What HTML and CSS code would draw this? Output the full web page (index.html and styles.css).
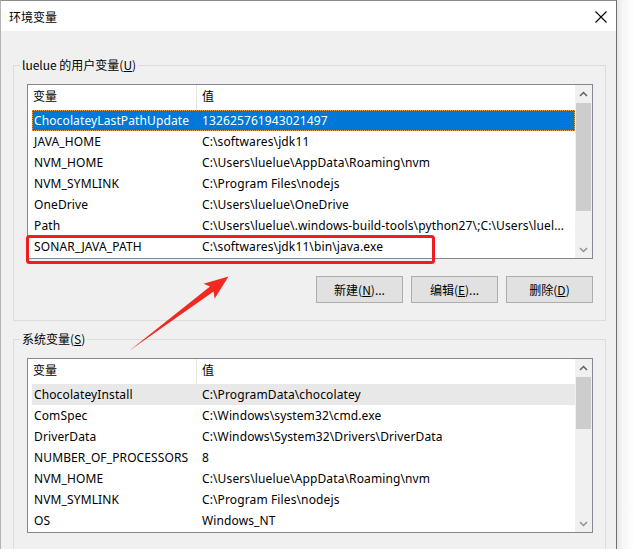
FILE: index.html
```html
<!DOCTYPE html>
<html lang="zh">
<head>
<meta charset="utf-8">
<title>环境变量</title>
<link rel="stylesheet" href="styles.css">
</head>
<body>
<div class="page">
  <div class="window">
    <div class="titlebar">
      <span class="title">环境变量</span>
      <svg class="close" width="12" height="12" viewBox="0 0 12 12"><path d="M0.5 0.5 L11.5 11.5 M11.5 0.5 L0.5 11.5" stroke="#000" stroke-width="1.1" fill="none"/></svg>
    </div>
    <div class="content">
      <fieldset class="group">
        <legend>luelue 的用户变量(<u>U</u>)</legend>
        <div class="listview">
          <div class="lv-main">
            <div class="lv-head"><div class="h1">变量</div><div class="h2">值</div></div>
            <div class="row focus"><div class="c1">ChocolateyLastPathUpdate</div><div class="c2">132625761943021497</div></div>
            <div class="row"><div class="c1">JAVA_HOME</div><div class="c2">C:\softwares\jdk11</div></div>
            <div class="row"><div class="c1">NVM_HOME</div><div class="c2">C:\Users\luelue\AppData\Roaming\nvm</div></div>
            <div class="row"><div class="c1">NVM_SYMLINK</div><div class="c2">C:\Program Files\nodejs</div></div>
            <div class="row"><div class="c1">OneDrive</div><div class="c2">C:\Users\luelue\OneDrive</div></div>
            <div class="row"><div class="c1">Path</div><div class="c2">C:\Users\luelue\.windows-build-tools\python27\;C:\Users\luel...</div></div>
            <div class="row"><div class="c1">SONAR_JAVA_PATH</div><div class="c2">C:\softwares\jdk11\bin\java.exe</div></div>
          </div>
          <div class="vscroll">
            <div class="arrow"><svg width="9" height="6" viewBox="0 0 9 6"><path d="M1 5 L4.5 1.5 L8 5" stroke="#606060" stroke-width="1.5" fill="none"/></svg></div>
            <div class="track"><div class="thumb" style="margin-top:1px;height:108px"></div></div>
            <div class="arrow"><svg width="9" height="6" viewBox="0 0 9 6"><path d="M1 1 L4.5 4.5 L8 1" stroke="#909090" stroke-width="1.5" fill="none"/></svg></div>
          </div>
        </div>
        <div class="buttons">
          <button class="btn">新建(<u>N</u>)...</button>
          <button class="btn">编辑(<u>E</u>)...</button>
          <button class="btn">删除(<u>D</u>)</button>
        </div>
      </fieldset>
      <fieldset class="group group2">
        <legend>系统变量(<u>S</u>)</legend>
        <div class="listview">
          <div class="lv-main">
            <div class="lv-head"><div class="h1">变量</div><div class="h2">值</div></div>
            <div class="row inactive"><div class="c1">ChocolateyInstall</div><div class="c2">C:\ProgramData\chocolatey</div></div>
            <div class="row"><div class="c1">ComSpec</div><div class="c2">C:\Windows\system32\cmd.exe</div></div>
            <div class="row"><div class="c1">DriverData</div><div class="c2">C:\Windows\System32\Drivers\DriverData</div></div>
            <div class="row"><div class="c1">NUMBER_OF_PROCESSORS</div><div class="c2">8</div></div>
            <div class="row"><div class="c1">NVM_HOME</div><div class="c2">C:\Users\luelue\AppData\Roaming\nvm</div></div>
            <div class="row"><div class="c1">NVM_SYMLINK</div><div class="c2">C:\Program Files\nodejs</div></div>
            <div class="row"><div class="c1">OS</div><div class="c2">Windows_NT</div></div>
          </div>
          <div class="vscroll">
            <div class="arrow"><svg width="9" height="6" viewBox="0 0 9 6"><path d="M1 5 L4.5 1.5 L8 5" stroke="#606060" stroke-width="1.5" fill="none"/></svg></div>
            <div class="track"><div class="thumb" style="margin-top:1px;height:52px"></div></div>
            <div class="arrow"><svg width="9" height="6" viewBox="0 0 9 6"><path d="M1 1 L4.5 4.5 L8 1" stroke="#909090" stroke-width="1.5" fill="none"/></svg></div>
          </div>
        </div>
      </fieldset>
    </div>
  </div>
  <div class="shadow"></div>
  <svg class="annotation" width="638" height="549" viewBox="0 0 638 549">
    <rect x="27.5" y="236.5" width="406" height="26" rx="2" ry="2" fill="none" stroke="#f21c1c" stroke-width="3"/>
    <polygon points="129,351 210,286.6 203.5,283.8 228.5,276.5 214.6,298.8 213.6,291.4" fill="#f02a22"/>
  </svg>
</div>
</body>
</html>
```

FILE: styles.css
```css
html, body {
  margin: 0;
  padding: 0;
  background: #ffffff;
}

.page {
  position: relative;
  width: 638px;
  height: 549px;
  overflow: hidden;
  display: flex;
  font-family: "Noto Sans", "Noto Sans CJK SC", sans-serif;
  font-size: 12px;
  color: #000;
}

.window {
  width: 617px;
  height: 549px;
  box-sizing: border-box;
  border-top: 1px solid #8c8c8c;
  border-right: 1px solid #6f6f6f;
  border-left: 1px solid #b4b4b4;
  display: flex;
  flex-direction: column;
  flex: none;
}

.shadow {
  flex: 1;
  background: linear-gradient(to right, #e6e6e6, #f7f7f7 6px, #ffffff 18px);
}

.titlebar {
  height: 30px;
  flex: none;
  background: #ffffff;
  display: flex;
  align-items: center;
  justify-content: space-between;
  padding: 0 9px 0 8px;
}

.title {
  font-family: "Noto Sans CJK SC", sans-serif;
  font-size: 12px;
  line-height: 16px;
  margin-top: 1px;
}

.close {
  display: block;
  margin-top: 1px;
}

.content {
  flex: 1;
  background: #f0f0f0;
  padding: 0 10px 0 12px;
  overflow: hidden;
}

.group {
  margin: 26px 0 0 0;
  padding: 11px 12px 17px 13px;
  border: 1px solid #dcdcdc;
  min-width: 0;
}

.group2 {
  margin-top: 10px;
  padding-bottom: 60px;
}

.group legend {
  font-family: "Noto Sans CJK SC", sans-serif;
  line-height: 16px;
  padding: 0 2px;
  margin-left: -7px;
  color: #000;
}

.listview {
  height: 175px;
  box-sizing: border-box;
  border: 1px solid #828790;
  background: #ffffff;
  display: flex;
}

.lv-main {
  flex: 1;
  overflow: hidden;
  min-width: 0;
}

.lv-head {
  height: 25px;
  display: flex;
}

.lv-head .h1 {
  width: 163px;
  padding-left: 5px;
  border-right: 1px solid #e5e5e5;
  font-family: "Noto Sans CJK SC", sans-serif;
  line-height: 22px;
}

.lv-head .h2 {
  padding-left: 5px;
  font-family: "Noto Sans CJK SC", sans-serif;
  line-height: 22px;
}

.row {
  height: 21px;
  margin-left: 4px;
  display: flex;
  align-items: center;
  white-space: nowrap;
  letter-spacing: 0.12px;
}

.row .c1 {
  width: 162px;
  padding-left: 2px;
  flex: none;
  overflow: hidden;
}

.row .c2 {
  padding-left: 6px;
  overflow: hidden;
}

.row.focus {
  background: #0078d7;
  color: #ffffff;
  outline: 1px dotted #f0a050;
  outline-offset: -1px;
}

.row.inactive {
  background: #e8e8e8;
}

.vscroll {
  width: 17px;
  flex: none;
  background: #f0f0f0;
  display: flex;
  flex-direction: column;
}

.arrow {
  height: 17px;
  display: flex;
  align-items: center;
  justify-content: center;
  flex: none;
}

.track {
  flex: 1;
}

.thumb {
  background: #cdcdcd;
  margin: 0 1px;
}

.buttons {
  margin-top: 17px;
  display: flex;
  justify-content: flex-end;
  gap: 8px;
}

.btn {
  width: 87px;
  height: 27px;
  box-sizing: border-box;
  border: 1px solid #adadad;
  background: #e1e1e1;
  font-family: "Noto Sans CJK SC", sans-serif;
  font-size: 12px;
  color: #000;
  padding: 0;
  margin: 0;
}

.annotation {
  position: absolute;
  left: 0;
  top: 0;
  pointer-events: none;
}
```
